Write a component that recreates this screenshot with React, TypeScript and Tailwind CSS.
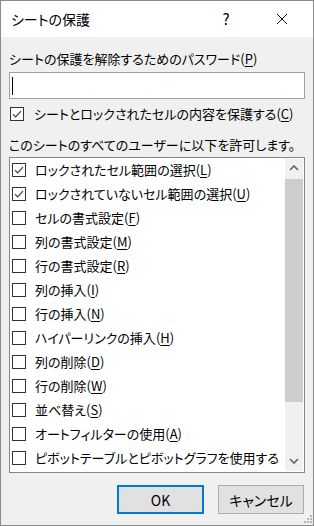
import React from 'react';

type Item = { label: string; key?: string; checked?: boolean };

const items: Item[] = [
	{ label: 'ロックされたセル範囲の選択', key: 'L', checked: true },
	{ label: 'ロックされていないセル範囲の選択', key: 'U', checked: true },
	{ label: 'セルの書式設定', key: 'F' },
	{ label: '列の書式設定', key: 'M' },
	{ label: '行の書式設定', key: 'R' },
	{ label: '列の挿入', key: 'I' },
	{ label: '行の挿入', key: 'N' },
	{ label: 'ハイパーリンクの挿入', key: 'H' },
	{ label: '列の削除', key: 'D' },
	{ label: '行の削除', key: 'W' },
	{ label: '並べ替え', key: 'S' },
	{ label: 'オートフィルターの使用', key: 'A' },
	{ label: 'ピボットテーブルとピボットグラフを使用する' },
];

const CheckBox: React.FC<{ checked?: boolean }> = ({ checked }) => (
	<span className="w-[14px] h-[14px] border border-[#333333] bg-white flex items-center justify-center shrink-0">
		{checked && (
			<svg width="12" height="12" viewBox="0 0 12 12">
				<path d="M2 6.2 L4.6 8.8 L10 3.2" stroke="#3c3c3c" strokeWidth="1.2" fill="none" />
			</svg>
		)}
	</span>
);

const Label: React.FC<{ text: string; k?: string }> = ({ text, k }) => (
	<span className="whitespace-nowrap">
		{text}
		{k && (
			<>
				(<span className="underline underline-offset-2">{k}</span>)
			</>
		)}
	</span>
);

const Chevron: React.FC<{ up?: boolean }> = ({ up }) => (
	<svg width="10" height="6" viewBox="0 0 10 6">
		<path d={up ? 'M1 5 L5 1 L9 5' : 'M1 1 L5 5 L9 1'} stroke="#606060" strokeWidth="1.6" fill="none" />
	</svg>
);

const App: React.FC = () => {
	return (
		<div className="w-[314px] h-[526px] flex flex-col border border-[#8a8a8a] bg-[#f0f0f0] text-black text-[13px] leading-[18px] font-['Noto_Sans_CJK_JP','Liberation_Sans',sans-serif] [font-feature-settings:'palt'] overflow-hidden">
			<div className="h-[36px] bg-white flex items-center shrink-0 pl-[10px]">
				<span className="text-[14px] flex-1">シートの保護</span>
				<span className="w-[30px] text-center text-[15px] mr-[19px]">?</span>
				<span className="w-[44px] flex justify-center mr-[9px]">
					<svg width="12" height="12" viewBox="0 0 12 12">
						<path d="M1 1 L11 11 M11 1 L1 11" stroke="#111" strokeWidth="1" fill="none" />
					</svg>
				</span>
			</div>
			<div className="flex flex-col flex-1 px-[8px]">
				<div className="mt-[13px]">
					<Label text="シートの保護を解除するためのパスワード" k="P" />
				</div>
				<div className="mt-[4px] h-[27px] border border-[#a0a0a0] bg-white flex items-center pl-[2px]">
					<span className="w-px h-[18px] bg-black" />
				</div>
				<div className="mt-[6px] flex items-center gap-[10px] pl-px">
					<CheckBox checked />
					<Label text="シートとロックされたセルの内容を保護する" k="C" />
				</div>
				<div className="mt-[13px]">このシートのすべてのユーザーに以下を許可します。</div>
				<div className="mt-[3px] h-[316px] border border-[#828790] bg-white flex">
					<div className="flex-1 flex flex-col overflow-hidden">
						{items.map((it) => (
							<div key={it.label} className="h-[24px] flex items-center gap-[9px] pl-[2px] shrink-0">
								<CheckBox checked={it.checked} />
								<Label text={it.label} k={it.key} />
							</div>
						))}
					</div>
					<div className="w-[18px] my-px mr-px bg-[#f0f0f0] flex flex-col">
						<div className="h-[18px] flex items-center justify-center">
							<Chevron up />
						</div>
						<div className="flex-1 flex flex-col">
							<div className="mt-[2px] h-[223px] bg-[#cdcdcd]" />
						</div>
						<div className="h-[20px] flex items-center justify-center">
							<Chevron />
						</div>
					</div>
				</div>
				<div className="mt-[12px] flex justify-end gap-[14px] pr-px">
					<button className="w-[87px] h-[29px] border-2 border-[#0078d7] bg-[#e1e1e1] text-[14px]">OK</button>
					<button className="w-[86px] h-[29px] border border-[#adadad] bg-[#e1e1e1] text-[14px]">キャンセル</button>
				</div>
				<div className="flex-1 flex justify-end items-end -mr-[8px]">
					<svg width="12" height="12" viewBox="0 0 12 12">
						<rect x="9" y="1" width="2" height="2" fill="#b8b8b8" />
						<rect x="6" y="4" width="2" height="2" fill="#b8b8b8" />
						<rect x="9" y="4" width="2" height="2" fill="#b8b8b8" />
						<rect x="3" y="7" width="2" height="2" fill="#b8b8b8" />
						<rect x="6" y="7" width="2" height="2" fill="#b8b8b8" />
						<rect x="9" y="7" width="2" height="2" fill="#b8b8b8" />
					</svg>
				</div>
			</div>
		</div>
	);
};

export default App;
